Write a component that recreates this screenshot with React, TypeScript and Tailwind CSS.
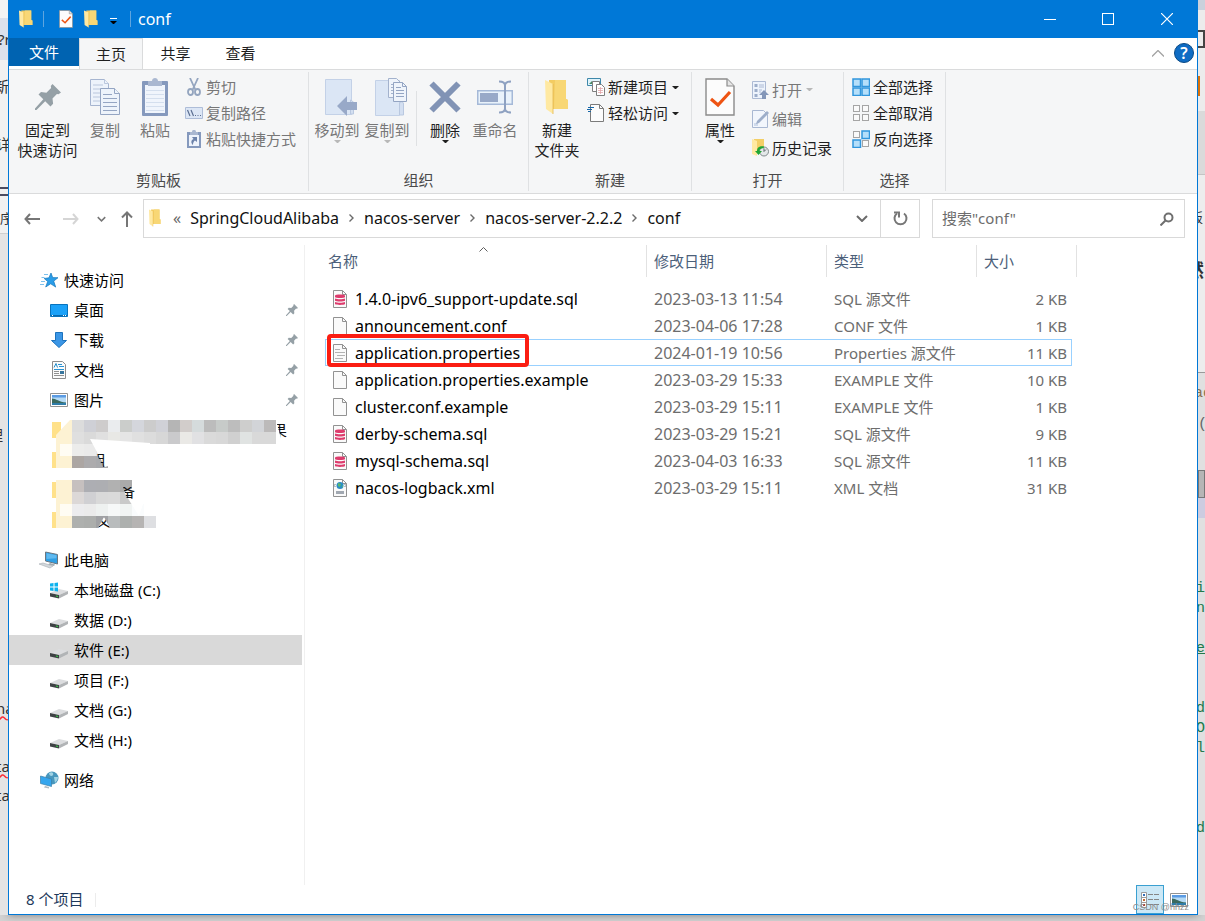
import type { ReactNode } from "react";

const files = [
  { name: "1.4.0-ipv6_support-update.sql", date: "2023-03-13 11:54", type: "SQL 源文件", size: "2 KB", icon: "sql" },
  { name: "announcement.conf", date: "2023-04-06 17:28", type: "CONF 文件", size: "1 KB", icon: "blank" },
  { name: "application.properties", date: "2024-01-19 10:56", type: "Properties 源文件", size: "11 KB", icon: "lines", selected: true },
  { name: "application.properties.example", date: "2023-03-29 15:33", type: "EXAMPLE 文件", size: "10 KB", icon: "blank" },
  { name: "cluster.conf.example", date: "2023-03-29 15:11", type: "EXAMPLE 文件", size: "1 KB", icon: "blank" },
  { name: "derby-schema.sql", date: "2023-03-29 15:21", type: "SQL 源文件", size: "9 KB", icon: "sql" },
  { name: "mysql-schema.sql", date: "2023-04-03 16:33", type: "SQL 源文件", size: "11 KB", icon: "sql" },
  { name: "nacos-logback.xml", date: "2023-03-29 15:11", type: "XML 文档", size: "31 KB", icon: "xml" },
];

const drives = ["数据 (D:)", "软件 (E:)", "项目 (F:)", "文档 (G:)", "文档 (H:)"];

const crumbs = ["SpringCloudAlibaba", "nacos-server", "nacos-server-2.2.2", "conf"];

/* ---------- icons ---------- */

function FolderIcon({ className = "h-[18px] w-[14px]" }: { className?: string }) {
  return (
    <svg className={className} viewBox="0 0 24 36" preserveAspectRatio="none">
      <path d="M4 1h17v19l2 1v9H5z" fill="#f3cc62" />
      <path d="M10 1h11v19l2 1v9H9z" fill="#f8d775" />
      <path d="M0 1l8 4v30l-7-5z" fill="#ffe9a2" />
      <path d="M8 5v30" stroke="#e3b84e" strokeWidth="0.8" />
    </svg>
  );
}

function CheckDocIcon({ className }: { className: string }) {
  return (
    <svg className={className} viewBox="0 0 30 38" preserveAspectRatio="none">
      <path d="M1 1h21l7 7v29H1z" fill="#fcfcfc" stroke="#8b8b8b" strokeWidth="1.4" />
      <path d="M22 1v7h7" fill="#e6e6e6" stroke="#8b8b8b" strokeWidth="1.2" />
      <path d="M6 21l7 6L25 14" fill="none" stroke="#ee5413" strokeWidth="3.2" />
    </svg>
  );
}

function PinIcon({ className }: { className: string }) {
  return (
    <svg className={className} viewBox="0 0 26 26" fill="#95a0a6">
      <path d="M17.500 0L26 8.500l-2.500 1.800-1.600-.3-4.400 4.600.6 5.200-2.600 2.700-5.300-5.200L1.500 26 0 26 0 24.500 8.300 15.300 3.500 10.600 6 8.100l5.400.6L16.100 4 15.800 2z" />
    </svg>
  );
}

function CopyIcon() {
  return (
    <svg className="h-9 w-[30px]" viewBox="0 0 30 36" fill="#edf3fb" stroke="#a6b5d0">
      <path d="M.5.5h14l4 4v22H.5z" />
      <path d="M14.5.5v4h4M3 6h10M3 10h12M3 14h7M3 18h7M3 22h7" stroke="#bac7dd" />
      <path d="M10.500 9.500h14l5 5v21h-19z" stroke="#94a5c3" />
      <path d="M24.500 9.500v5h5M13 15.500h9M13 19.500h14M13 23.500h14M13 27.500h14M13 31.500h14" stroke="#94a5c3" />
    </svg>
  );
}

function PasteIcon() {
  return (
    <svg className="h-[38px] w-[26px]" viewBox="0 0 26 38">
      <rect y="3" width="26" height="35" rx="1" fill="#8599bd" />
      <path d="M3 7h20v28H3z" fill="#f0f5fc" />
      <path d="M4 12.500h18M4 16.500h18M4 20.500h18M4 24.500h18M4 28.500h18M4 32.500h18" stroke="#d4dfee" />
      <path d="M6 3h4c0-4 6-4 6 0h4v5H6z" fill="#aab8d1" />
    </svg>
  );
}

function ScissorsIcon() {
  return (
    <svg className="h-[18px] w-[14px]" viewBox="0 0 14 18" fill="none" stroke="#94a5bf">
      <path d="M3 0l5.500 12M11 0L5.500 12" strokeWidth="1.800" />
      <ellipse cx="3.500" cy="14" rx="2.500" ry="3" strokeWidth="1.800" />
      <ellipse cx="10.500" cy="14" rx="2.500" ry="3" strokeWidth="1.800" />
    </svg>
  );
}

function CopyPathIcon() {
  return (
    <svg className="h-3 w-[18px]" viewBox="0 0 18 12">
      <path d="M.5.5h17v11H.5z" fill="#dce6f5" stroke="#aebdd8" />
      <path d="M2.500 3l2.500 6M6 3l2.500 6" stroke="#5c6f92" strokeWidth="1.200" />
      <path d="M10 8.500h1M12.500 8.500h1M15 8.500h1" stroke="#5c6f92" />
    </svg>
  );
}

function PasteShortcutIcon() {
  return (
    <svg className="h-[18px] w-[14px]" viewBox="0 0 14 18">
      <path d="M0 2h14v16H0z" fill="#8599bd" />
      <path d="M2 5h10v11H2z" fill="#eef3fb" />
      <path d="M3 2h2c0-3 4-3 4 0h2v3H3z" fill="#a9b7d0" />
      <path d="M5 7h5v5l-2-1.500C6.500 11.500 6 13 6 15 3.500 13 4 10 6.500 9z" fill="#6d83ab" />
    </svg>
  );
}

function MoveToIcon() {
  return (
    <svg className="h-[38px] w-8" viewBox="0 0 32 38">
      <path d="M.5 1.500h26v35H.5z" fill="#dbe6f5" stroke="#c3d1e7" />
      <path d="M25.500 22v14h3V24z" fill="#d3dff1" stroke="#b9c8e0" />
      <path d="M12 28l10-10v6h10v8H22v6z" fill="#98a9c8" />
    </svg>
  );
}

function CopyToIcon() {
  return (
    <svg className="h-[38px] w-8" viewBox="0 0 32 38">
      <path d="M.5 2.500h24v35H.5z" fill="#dbe6f5" stroke="#c3d1e7" />
      <path d="M24.500 26c0-3 4-3 4 0v11h-4z" fill="#d3dff1" stroke="#b9c8e0" />
      <path d="M13.500.5h8l4 4v15h-12z" fill="#eff4fb" stroke="#a3b2cd" />
      <path d="M16 6.500h2M16 9.500h2M16 12.500h2M16 15.500h2" stroke="#a3b2cd" />
      <path d="M18.500 4.500h9l4 4v15h-13z" fill="#eff4fb" stroke="#94a5c3" />
      <path d="M27.500 4.500v4h4M21 9.500h5M21 12.500h8M21 15.500h8M21 18.500h8" fill="none" stroke="#94a5c3" />
    </svg>
  );
}

function DeleteIcon() {
  return (
    <svg className="size-8" viewBox="0 0 32 32">
      <path d="M2.500 2.500l27 27M29.500 2.500l-27 27" stroke="#8193b5" strokeWidth="6" />
    </svg>
  );
}

function RenameIcon() {
  return (
    <svg className="h-[34px] w-9" viewBox="0 0 36 34">
      <path d="M.75 10.750h34.500v13.500H.75z" fill="#e9f2fb" stroke="#a5b9d8" strokeWidth="1.500" />
      <path d="M3 13h18v9H3z" fill="#98a9c8" />
      <path d="M22 1.500c4 0 6 1 6 4v23c0 3-2 4-6 4M34 1.500c-4 0-6 1-6 4M28 28.500c0 3 2 4 6 4" fill="none" stroke="#8ea1c1" strokeWidth="2" />
    </svg>
  );
}

function NewItemIcon() {
  return (
    <svg className="h-[18px] w-[18px]" viewBox="0 0 18 18">
      <path d="M.5.5h13v7H.5z" fill="#dff3fb" stroke="#3e88aa" />
      <path d="M2 6l3-3 3 3z" fill="#4a8a65" />
      <path d="M5.500 3.500h7v10h-7z" fill="#fff" stroke="#7f7f7f" />
      <path d="M9.500 6.500h5l3 3v8h-8z" fill="#fff" stroke="#7f7f7f" />
      <path d="M11 10.500h5M11 12.500h5M11 14.500h5M13.500 9v7" stroke="#df9ca0" strokeWidth=".7" />
    </svg>
  );
}

function EasyAccessIcon() {
  return (
    <svg className="h-[18px] w-[18px]" viewBox="0 0 18 18">
      <path d="M3.500.5h9l4 4v13h-13z" fill="#fcfcfc" stroke="#7b7b7b" />
      <path d="M12.500.5v4h4" fill="none" stroke="#7b7b7b" />
      <path d="M1 3.500h6M0 5.500h5M1 7.500h3" stroke="#1767a8" strokeWidth="1.200" />
    </svg>
  );
}

function OpenIcon() {
  return (
    <svg className="h-[18px] w-[17px]" viewBox="0 0 17 18">
      <path d="M.5.5h13v17H.5z" fill="#edf3fc" stroke="#acbad4" />
      <path d="M2.500 3h3v3h-3zM2.500 8h3v3h-3zM2.500 13h3v3h-3z" fill="#9daeca" />
      <path d="M7 4h5M7 6h5M7 9h3M7 11h2" stroke="#acbad4" />
      <path d="M12 9l5 5h-3v4h-4v-4H7z" fill="#8396b8" />
    </svg>
  );
}

function EditIcon() {
  return (
    <svg className="h-[18px] w-[17px]" viewBox="0 0 17 18">
      <path d="M.5.500h11l4 4v13H.5z" fill="#f2f6fc" stroke="#a9b8d2" />
      <path d="M2 13h4v3H2z" fill="#cfdaeb" />
      <path d="M4 14l1-3L15 1l2 2L7 13z" fill="#9daec9" />
    </svg>
  );
}

function HistoryIcon() {
  return (
    <svg className="h-[18px] w-[17px]" viewBox="0 0 17 18">
      <path d="M2 0h10v13H2z" fill="#f3cf67" />
      <path d="M0 0l5 2v15l-5-2z" fill="#ffe9a2" />
      <circle cx="12" cy="12.500" r="4.500" fill="#e4e8e9" stroke="#818a8d" />
      <path d="M12 12.500V9.500M12 12.500l2-2" stroke="#5b666a" />
      <path d="M12 7.500c-5-1-7 1.500-7 4.500H3l3.500 4L10 12H7.500c0-2 2-3 4-2.500z" fill="#21a633" />
    </svg>
  );
}

/* four tiles, the filled ones are drawn in blue */
function TilesIcon({ filled }: { filled: boolean[] }) {
  const spots = [[1, 1], [10, 1], [1, 10], [10, 10]];
  return (
    <svg className="size-[18px]" viewBox="0 0 18 18">
      {spots.map(([x, y], i) => (
        <rect
          key={i}
          x={filled[i] ? x : x + 0.5}
          y={filled[i] ? y : y + 0.5}
          width={filled[i] ? 7.5 : 6}
          height={filled[i] ? 7.5 : 6}
          fill={filled[i] ? "#b5dffa" : "#fafafa"}
          stroke={filled[i] ? "#3196dd" : "#a5a5a5"}
          strokeWidth={filled[i] ? 1.5 : 1}
        />
      ))}
    </svg>
  );
}

function Caret({ className = "text-[#1f1f1f]" }: { className?: string }) {
  return (
    <svg className={"h-[3px] w-[7px] shrink-0 " + className} viewBox="0 0 7 3" fill="currentColor">
      <path d="M0 0h7L4 3H3z" />
    </svg>
  );
}

function ChevronIcon({ className }: { className: string }) {
  return (
    <svg className={className} viewBox="0 0 12 7" fill="none" stroke="currentColor" strokeWidth="2">
      <path d="M1 1l5 5 5-5" />
    </svg>
  );
}

function FileIcon({ kind }: { kind: string }) {
  return (
    <svg className="h-[18px] w-4 shrink-0" viewBox="0 0 16 18">
      <path d="M1.500.5h9l4 4v13h-13z" fill="#fafafa" stroke="#929292" />
      <path d="M10.500.5v4h4" fill="none" stroke="#929292" />
      {kind === "sql" && (
        <g fill="#dd3c6d">
          <path d="M3 5.500c0-1.300 10-1.300 10 0v1.500c0 1.300-10 1.300-10 0z" />
          <path d="M3 8.500c2 1 8 1 10 0v2.200c-1 1-9 1-10 0z" />
          <path d="M3 12c2 1 8 1 10 0v2c-1 1.200-9 1.200-10 0z" />
        </g>
      )}
      {kind === "lines" && <path d="M3 5.500h5M3 8.500h10M5 11.500h8M3 14.500h8" stroke="#b3b3b3" />}
      {kind === "xml" && (
        <g>
          <circle cx="8" cy="6.500" r="3.500" fill="#2c8dc5" />
          <path d="M6 4l3 1-1 3-2-1zM10 6l1 1-1 2z" fill="#5bba6c" />
          <path d="M3.500 5L2 6.500 3.500 8M12.500 5L14 6.500 12.500 8" fill="none" stroke="#7c8792" />
          <path d="M4 12h8v3H4z" fill="#a1a8b1" />
        </g>
      )}
    </svg>
  );
}

function StarIcon() {
  return (
    <svg className="h-4 w-[18px]" viewBox="0 0 18 16">
      <path d="M11 1l1.700 4.600 5.300.1-4.300 3.400 2 6-5-3.300-5 3.200 2-5.500-3.500-3 4.700-.7z" fill="#2a9de8" stroke="#1477bc" strokeWidth=".7" />
      <path d="M4 2.500h4M1.500 5.500h3M1 9.500h4M0 12.500h4" stroke="#5cb1e9" strokeWidth=".8" />
    </svg>
  );
}

function DesktopIcon() {
  return (
    <svg className="h-[13px] w-[18px]" viewBox="0 0 18 13">
      <path d="M.5.5h17v12H.5z" fill="#1ba1f8" stroke="#0873bd" />
      <path d="M1 11.500h16" stroke="#0869ae" />
      <path d="M2 11.500h1M13 11.500h1M15 11.500h1" stroke="#fff" />
    </svg>
  );
}

function DownloadIcon() {
  return (
    <svg className="h-4 w-[18px]" viewBox="0 0 18 16">
      <path d="M5.500.5h7v8h4L9 15.500 1.500 8.500h4z" fill="#3b96e6" stroke="#1c72bd" />
    </svg>
  );
}

function DocumentIcon() {
  return (
    <svg className="h-[18px] w-[18px]" viewBox="0 0 18 18">
      <path d="M2.500.5h10l3 3v14h-13z" fill="#fbfbfb" stroke="#8c8c8c" />
      <path d="M4 6.500L6 2.500l1.500 4" stroke="#218bc9" fill="none" />
      <path d="M8 3.500h4M9 5.500h5M4 8.500h10" stroke="#2a93d4" />
      <path d="M4 10.500h5M4 12.500h5M4 14.500h10" stroke="#919191" />
      <path d="M10 10h4v3h-4z" fill="#37759d" />
    </svg>
  );
}

function PictureIcon() {
  return (
    <svg className="h-[14px] w-[18px]" viewBox="0 0 18 14">
      <path d="M.5.5h17v13H.5z" fill="#fff" stroke="#929292" />
      <path d="M2 2h14v10H2z" fill="#b5daf5" />
      <path d="M2 2h14v2.500H2z" fill="#5b9be3" />
      <path d="M2 5.500c4 0 7 3.500 14 4v1H2z" fill="#3b6a5f" />
      <path d="M2 10h14v2H2z" fill="#2f7da9" />
    </svg>
  );
}

function ComputerIcon() {
  return (
    <svg className="h-[18px] w-5" viewBox="0 0 20 18">
      <path d="M6.500 1l12 2.500v9.500l-12-3z" fill="#2f9fe4" stroke="#6a7680" />
      <path d="M7.500 2.300l10 2v3l-10 .7z" fill="#60baf0" />
      <path d="M11 12l5 1.500-1 1.500-6-1.500z" fill="#a2abb0" />
      <path d="M0 13l4-1 10 3-3 2z" fill="#d3d8dc" stroke="#a6adb3" strokeWidth=".6" />
    </svg>
  );
}

function DriveIcon({ system }: { system?: boolean }) {
  return (
    <svg className="h-[18px] w-[18px]" viewBox="0 0 18 18">
      <path d="M0 12l9-4 9 2-9 4z" fill="#dcdddf" />
      <path d="M9 14l9-4v3l-9 4.500z" fill="#b1b4b6" />
      <path d="M0 12l9 2v3.500L0 15.500z" fill="#3e4244" />
      <path d="M6 14.500l2 .5v1l-2-.5z" fill="#37d44a" />
      {system && <path d="M0 2.500l3.500-.5v3.500H0zM4.500 2L8 1.500v4H4.500zM0 6.500h3.500V10L0 9.500zM4.500 6.500H8v4l-3.500-.5z" fill="#0eb2ee" />}
    </svg>
  );
}

function NetworkIcon() {
  return (
    <svg className="h-[18px] w-[19px]" viewBox="0 0 19 18">
      <circle cx="12" cy="7" r="6.500" fill="#4897bd" />
      <path d="M9 2c3-2 5 0 4 2s-4 1-4-2zM14 6l4 0c0 3-2 5-3 6z" fill="#a0d3e5" />
      <path d="M.5 5l11 3v7.500L.5 12.500z" fill="#35a6ee" stroke="#3b7fa9" strokeWidth=".7" />
      <path d="M5 15l4 1v1.500l-5-1z" fill="#b1bbc1" />
    </svg>
  );
}

/* mosaic painted over four pinned folder names */
const mosaic = [
  { x: 22, y: 5, c: ["#dcdcdc", "#cfd0d6", "#cecccc", "#eaecee", "#cbcdcb", "#d4d6dc", "#cccccc", "#d0d1d7", "#b5b5b5", "#d2cdcb", "#d5dbdc", "#bcbcbc", "#c7cbc9", "#bdbdbd", "#cececd", "#d2d4d8", "#bcbaba"] },
  { x: 22, y: 17, c: ["#dfdfdf", "#dadada", "#e0e0e0", "#e8e8e5", "#e5e5e5", "#e0e0e0", "#dcdcdc", "#d7d7d7", "#cacacc", "#eae9e6", "#e1e1e3", "#dadada", "#d8d8d8", "#d0d0d0", "#e0e3e2", "#d9d9d9", "#d9d9d9"] },
  { x: 22, y: 29, c: ["#ececeb", "#eaeaea", "#e4e4e4"] },
  { x: 22, y: 41, c: ["#aca6a3", "#acabad", "#a8a9ac"] },
  { x: 22, y: 65, c: ["#c6c0bf", "#adaeb3", "#adaeb2", "#b1b1b1", "#aaaaaa"] },
  { x: 22, y: 77, c: ["#dcd8d7", "#d0d0d3", "#d9d9d9", "#dadada", "#c9c9c9"] },
  { x: 22, y: 89, c: ["#ececee", "#ebebeb", "#eef1f0", "#f6f8f8", "#f1f4f3", "#fafcfd"] },
  { x: 22, y: 101, c: ["#aeb0ae", "#acaeac", "#a0a1a4", "#b9bcbd", "#adb0ae", "#b6b4b3", "#dedfe2"] },
];

function HiddenFolders() {
  return (
    <svg className="h-[120px] w-[240px]" viewBox="0 0 240 120">
      <defs>
        <clipPath id="gaps">
          <path d="M227 9h13v18h-8zM46 38h9v14h-2zM73 72h13v12H77zM48 113l6-11 6 11z" />
        </clipPath>
      </defs>
      <path d="M2 7h9v16H2zM2 37h8v16H2zM2 67h8v16H2zM2 97h8v16H2z" fill="#ffe18a" />
      <path d="M6 20L20 5h2v48H6zM6 65h16v48H6z" fill="#fdf2d3" />
      <path d="M10 29h12v12H10zM10 89h12v12H10z" fill="#fffcf3" />
      {mosaic.map((row) =>
        row.c.map((color, i) => (
          <rect key={row.y + "-" + i} x={row.x + i * 12} y={row.y} width="12" height="12" fill={color} />
        ))
      )}
      <path d="M40 24l60 4v2H58v21l-3 1zM227 15l6 14h-6zM74 77l12-5 8 14-5 15z" fill="#fff" />
      <path d="M48 113l6-11 6 11z" fill="#fff" />
      <g clipPath="url(#gaps)" fill="#111" fontSize="15" fontFamily="'Noto Sans CJK SC', sans-serif">
        <text x="222" y="21">果</text>
        <text x="40" y="51">明</text>
        <text x="70" y="82">备</text>
        <text x="46" y="111">文</text>
      </g>
    </svg>
  );
}

/* ---------- ribbon ---------- */

function Group({ label, className, children }: { label: string; className: string; children: ReactNode }) {
  return (
    <section className={"my-0.5 flex flex-col border-r border-[#dfe1e3] " + className}>
      <div className="flex flex-1 items-start">{children}</div>
      <h2 className="text-center leading-[22px] text-[#4a4a4a]">{label}</h2>
    </section>
  );
}

type BigProps = { icon: ReactNode; lines: string[]; disabled?: boolean; caret?: boolean; className?: string };

function BigButton({ icon, lines, disabled, caret, className = "w-[50px]" }: BigProps) {
  return (
    <button
      disabled={disabled}
      className={"flex shrink-0 flex-col items-center pt-1.5 whitespace-nowrap " + (disabled ? "text-[#777] " : "text-[#1f1f1f] ") + className}
    >
      <span className="flex h-[42px] items-center pb-1">{icon}</span>
      {lines.map((line) => (
        <span key={line} className="leading-5">{line}</span>
      ))}
      {caret && <Caret className={disabled ? "text-[#b8b8b8]" : "text-[#1f1f1f]"} />}
    </button>
  );
}

type SmallProps = { icon: ReactNode; label: string; disabled?: boolean; caret?: boolean; className?: string };

function SmallButton({ icon, label, disabled, caret, className = "h-[26px]" }: SmallProps) {
  return (
    <button
      disabled={disabled}
      className={"flex items-center whitespace-nowrap " + (disabled ? "text-[#777] " : "text-[#1f1f1f] ") + className}
    >
      <span className="mr-[3px] flex w-[18px] justify-center">{icon}</span>
      <span className="mr-1">{label}</span>
      {caret && <Caret className={disabled ? "text-[#b8b8b8]" : "text-[#1f1f1f]"} />}
    </button>
  );
}

function Ribbon() {
  return (
    <div className="flex h-[125px] border-y border-[#dadbdc] bg-[#f5f6f7]">
      <Group label="剪贴板" className="w-[300px]">
        <BigButton className="ml-1.5 w-[65px]" icon={<PinIcon className="size-[26px]" />} lines={["固定到", "快速访问"]} />
        <BigButton icon={<CopyIcon />} lines={["复制"]} disabled />
        <BigButton icon={<PasteIcon />} lines={["粘贴"]} disabled />
        <div className="flex flex-col pt-0.5 pl-[5px]">
          <SmallButton icon={<ScissorsIcon />} label="剪切" disabled />
          <SmallButton icon={<CopyPathIcon />} label="复制路径" disabled />
          <SmallButton icon={<PasteShortcutIcon />} label="粘贴快捷方式" disabled />
        </div>
      </Group>
      <Group label="组织" className="w-[220px]">
        <div className="ml-[3px] flex">
          <BigButton icon={<span className="pl-2"><MoveToIcon /></span>} lines={["移动到"]} disabled caret />
          <BigButton icon={<span className="pl-2"><CopyToIcon /></span>} lines={["复制到"]} disabled caret />
        </div>
        <div className="mr-[3px] ml-1 mt-[19px] h-[55px] w-px bg-[#dfe1e3]" />
        <BigButton icon={<DeleteIcon />} lines={["删除"]} caret />
        <BigButton icon={<RenameIcon />} lines={["重命名"]} disabled />
      </Group>
      <Group label="新建" className="w-[163px]">
        <BigButton className="ml-[3px] w-[50px]" icon={<FolderIcon className="h-9 w-6" />} lines={["新建", "文件夹"]} />
        <div className="flex flex-col pt-0.5 pl-[5px]">
          <SmallButton icon={<NewItemIcon />} label="新建项目" caret />
          <SmallButton icon={<EasyAccessIcon />} label="轻松访问" caret />
        </div>
      </Group>
      <Group label="打开" className="w-[152px]">
        <BigButton className="ml-[3px] w-[50px]" icon={<CheckDocIcon className="h-[38px] w-[30px]" />} lines={["属性"]} caret />
        <div className="flex flex-col pt-[3px] pl-1.5">
          <SmallButton className="h-[29px]" icon={<OpenIcon />} label="打开" disabled caret />
          <SmallButton className="h-[29px]" icon={<EditIcon />} label="编辑" disabled />
          <SmallButton className="h-[29px]" icon={<HistoryIcon />} label="历史记录" />
        </div>
      </Group>
      <Group label="选择" className="w-[102px]">
        <div className="flex flex-col pt-0.5 pl-2">
          <SmallButton icon={<TilesIcon filled={[true, true, true, true]} />} label="全部选择" />
          <SmallButton icon={<TilesIcon filled={[false, false, false, false]} />} label="全部取消" />
          <SmallButton icon={<TilesIcon filled={[false, true, true, false]} />} label="反向选择" />
        </div>
      </Group>
    </div>
  );
}

/* ---------- window parts ---------- */

function TitleBar() {
  return (
    <header className="flex h-[38px] items-center bg-[#0078d7] text-white">
      <div className="flex flex-1 items-center pl-2.5">
        <FolderIcon />
        <span className="mr-[15px] ml-2.5 h-4 w-px bg-[#5ea5df]" />
        <button aria-label="属性"><CheckDocIcon className="block h-[18px] w-[14px]" /></button>
        <button aria-label="新建文件夹" className="ml-[11px]"><FolderIcon className="block h-[18px] w-[14px]" /></button>
        <button aria-label="自定义快速访问工具栏" className="ml-3 flex flex-col items-center gap-0.5 pt-1">
          <span className="h-px w-[7px] bg-white" />
          <Caret className="text-black" />
        </button>
        <span className="mr-[7px] ml-[13px] h-4 w-px bg-[#5ea5df]" />
        <h1 className="text-base leading-5">conf</h1>
      </div>
      <button aria-label="最小化" className="flex h-full w-[58px] items-center justify-center">
        <span className="h-px w-3 bg-white" />
      </button>
      <button aria-label="最大化" className="flex h-full w-[58px] items-center justify-center">
        <span className="size-3 border border-white" />
      </button>
      <button aria-label="关闭" className="flex h-full w-[60px] items-center justify-center">
        <svg className="size-3" viewBox="0 0 12 12" stroke="#fff" strokeWidth="1.200"><path d="M0 0l12 12M12 0L0 12" /></svg>
      </button>
    </header>
  );
}

function TabBar() {
  return (
    <nav className="-mb-px flex h-8 text-[#1f1f1f]">
      <button className="h-[28px] w-[70px] bg-[#0063b1] text-white">文件</button>
      <button className="w-16 border border-b-0 border-[#dadbdc] bg-[#f5f6f7] pb-0.5">主页</button>
      <button className="w-[65px] pb-0.5">共享</button>
      <button className="w-[65px] pb-0.5">查看</button>
      <div className="ml-auto flex items-center gap-2.5 pr-[3px] pb-0.5">
        <button aria-label="最小化功能区" className="text-[#a3a3a3]">
          <svg className="h-[7px] w-3" viewBox="0 0 12 7" fill="none" stroke="currentColor" strokeWidth="1.300"><path d="M0 6.500l6-6 6 6" /></svg>
        </button>
        <button className="size-5 rounded-full border border-[#0b4a85] bg-[#0f6cc4] text-base leading-4 font-semibold text-white">?</button>
      </div>
    </nav>
  );
}

function AddressBar() {
  return (
    <div className="flex h-[51px] items-center pr-3 pb-0.5">
      <div className="flex w-[134px] items-center pl-[15px] text-[#767676]">
        <button aria-label="后退">
          <svg className="h-3 w-4" viewBox="0 0 16 12" fill="none" stroke="currentColor" strokeWidth="2"><path d="M6 1L1.500 6 6 11M1.500 6H16" /></svg>
        </button>
        <button aria-label="前进" className="ml-[23px] text-[#d5d5d5]">
          <svg className="h-3 w-4" viewBox="0 0 16 12" fill="none" stroke="currentColor" strokeWidth="2"><path d="M10 1l4.500 5-4.500 5M14.500 6H0" /></svg>
        </button>
        <button aria-label="最近浏览的位置" className="ml-[18px]"><ChevronIcon className="h-[6px] w-[9px]" /></button>
        <button aria-label="上移" className="ml-[15px]">
          <svg className="h-4 w-3" viewBox="0 0 12 16" fill="none" stroke="currentColor" strokeWidth="2"><path d="M1 6.500L6 1.500l5 5M6 1.500V16" /></svg>
        </button>
      </div>
      <div className="mr-3 flex h-[39px] flex-1 items-center border border-[#d9d9d9]">
        <div className="flex flex-1 items-center overflow-hidden pb-0.5 pl-[5px] text-base whitespace-nowrap text-[#111]">
          <FolderIcon className="h-[18px] w-3" />
          <span className="mr-[9px] ml-3 leading-5 text-[#666]">«</span>
          {crumbs.map((crumb, i) => (
            <span key={crumb} className="flex items-center">
              {i > 0 && (
                <svg className="mx-2.5 h-2 w-[5px]" viewBox="0 0 5 8" fill="none" stroke="#6b6b6b" strokeWidth="1.400"><path d="M.5.5L4 4 .5 7.500" /></svg>
              )}
              <a href="#" className="leading-5">{crumb}</a>
            </span>
          ))}
        </div>
        <button aria-label="上一个位置" className="flex w-9 justify-center text-[#6b6b6b]"><ChevronIcon className="h-[7px] w-3" /></button>
        <button aria-label="刷新" className="flex h-full w-[39px] items-center justify-center border-l border-[#d9d9d9]">
          <svg className="size-[15px]" viewBox="0 0 15 15" fill="none" stroke="#777" strokeWidth="2">
            <path d="M11 2.500A6 6 0 1 1 4 2.500" />
            <path d="M1 1.500h5v5" />
          </svg>
        </button>
      </div>
      <label className="flex h-[39px] w-[253px] items-center border border-[#d9d9d9] px-[9px]">
        <input aria-label="搜索" placeholder={'搜索"conf"'} className="min-w-0 flex-1 pb-0.5 outline-none placeholder:text-[#6d6d6d]" />
        <svg className="mr-px size-[14px]" viewBox="0 0 14 14" fill="none" stroke="#6f6f6f" strokeWidth="2">
          <circle cx="8.500" cy="5.500" r="4" />
          <path d="M5.500 8.500L.5 13.500" />
        </svg>
      </label>
    </div>
  );
}

type NavItemProps = { icon: ReactNode; label: string; top?: boolean; pinned?: boolean; active?: boolean };

function NavItem({ icon, label, top, pinned, active }: NavItemProps) {
  return (
    <a
      href="#"
      className={"mr-0.5 flex h-[30px] items-center text-black " + (top ? "pl-[30px] " : "pl-10 ") + (active ? "bg-[#d9d9d9]" : "")}
    >
      <span className="mr-[5px] flex w-5 justify-center">{icon}</span>
      {label}
      {pinned && <PinIcon className="mr-1 ml-auto size-3" />}
    </a>
  );
}

function Sidebar() {
  return (
    <aside className="w-[296px] shrink-0 border-r border-[#f0f0f0] pt-5">
      <NavItem top icon={<StarIcon />} label="快速访问" />
      <NavItem pinned icon={<DesktopIcon />} label="桌面" />
      <NavItem pinned icon={<DownloadIcon />} label="下载" />
      <NavItem pinned icon={<DocumentIcon />} label="文档" />
      <NavItem pinned icon={<PictureIcon />} label="图片" />
      <div className="mb-2.5 pl-[41px]">
        <HiddenFolders />
      </div>
      <NavItem top icon={<ComputerIcon />} label="此电脑" />
      <NavItem icon={<DriveIcon system />} label="本地磁盘 (C:)" />
      {drives.map((drive) => (
        <NavItem key={drive} icon={<DriveIcon />} label={drive} active={drive === "软件 (E:)"} />
      ))}
      <div className="mt-2.5">
        <NavItem top icon={<NetworkIcon />} label="网络" />
      </div>
    </aside>
  );
}

function FileTable() {
  return (
    <table className="w-[752px] table-fixed border-separate border-spacing-0 text-left">
      <colgroup>
        <col className="w-[322px]" />
        <col className="w-[180px]" />
        <col className="w-[150px]" />
        <col className="w-[95px]" />
        <col className="w-[5px]" />
      </colgroup>
      <thead className="text-[#4c607a]">
        <tr className="h-8">
          <th className="relative border-r border-[#e2e2e2] pl-[3px] font-normal">
            名称
            <svg className="absolute top-0.5 left-[154px] h-[5px] w-[9px]" viewBox="0 0 9 5" fill="none" stroke="#5e5e5e"><path d="M.5 4.500l4-4 4 4" /></svg>
          </th>
          <th className="border-r border-[#e2e2e2] pl-[7px] font-normal">修改日期</th>
          <th className="border-r border-[#e2e2e2] pl-[7px] font-normal">类型</th>
          <th colSpan={2} className="border-r border-[#e2e2e2] pl-[7px] font-normal">大小</th>
        </tr>
      </thead>
      <tbody className="text-[#6d6d6d]">
        <tr className="h-2" aria-hidden="true" />
        {files.map((file) => {
          const edge = file.selected ? "border-[#99d1ff]" : "border-transparent";
          return (
            <tr key={file.name} className="h-[27px]">
              <td className={"relative border-y border-l pl-1.5 text-base text-black " + edge}>
                <span className="flex items-center gap-[7px]">
                  <FileIcon kind={file.icon} />
                  {file.name}
                </span>
                {file.selected && <span className="absolute -top-1.5 left-px h-[33px] w-[202px] rounded-sm border-4 border-[#fb1d12]" />}
              </td>
              <td className={"border-y pl-[7px] text-base " + edge}>{file.date}</td>
              <td className={"border-y pl-[7px] " + edge}>{file.type}</td>
              <td className={"border-y border-r pr-1 text-right " + edge}>{file.size}</td>
            </tr>
          );
        })}
      </tbody>
    </table>
  );
}

function StatusBar() {
  return (
    <footer className="relative flex h-[29px] items-center pr-[9px] pl-[17px] text-[#1e395b]">
      <span className="pb-0.5">8 个项目</span>
      <span className="ml-3 h-3.5 w-px bg-[#ececec]" />
      <button aria-label="详细信息" className="ml-auto flex h-full w-7 items-center justify-center border border-[#3aa0d1] bg-[#cce8f6]">
        <svg className="h-4 w-[18px]" viewBox="0 0 18 16">
          <path d="M.5.5h5v15h-5zM.5 5.500h5M.5 10.500h5" fill="#fff" stroke="#9b9b9b" />
          <path d="M2 3h2" stroke="#2f70ba" strokeWidth="2" />
          <path d="M2 8h2" stroke="#c06b35" strokeWidth="2" />
          <path d="M2 13h2" stroke="#b63636" strokeWidth="2" />
          <path d="M7 2.500h5M13 2.500h5M7 7.500h5M13 7.500h5M7 12.500h5M13 12.500h5" stroke="#858585" />
        </svg>
      </button>
      <button aria-label="大图标" className="ml-1.5"><PictureIcon /></button>
      <span className="absolute right-2 bottom-px font-['Liberation_Sans',sans-serif] text-[9px] leading-3 text-[#8d8d8d]">CSDN @hhzz</span>
    </footer>
  );
}

/* slivers of the windows that lie behind this one */
function BackdropLeft() {
  return (
    <div aria-hidden="true" className="relative w-2 shrink-0 overflow-hidden bg-[#e4e4e4] whitespace-nowrap text-[#333]">
      <div className="h-[18px] bg-[#f4f4f4]" />
      <div className="h-[42px] bg-[#dce1ec]" />
      <div className="h-[174px] border-b border-[#cfcfcf] bg-[#f1f1f1]" />
      <span className="absolute top-7 -left-0.5">?r</span>
      <span className="absolute top-[75px] -left-1.5">新</span>
      <span className="absolute top-[133px] -left-1">详</span>
      <span className="absolute top-[187px] h-[9px] w-2 border-y-2 border-[#4b4b60]" />
      <span className="absolute top-[207px] left-0 text-[13px]">序</span>
      <span className="absolute top-[424px] -left-3">理</span>
      <span className="absolute top-[697px] -left-1 underline decoration-red-500 decoration-wavy">na</span>
      <span className="absolute top-[755px] -left-1 underline decoration-red-500 decoration-wavy">ta</span>
      <span className="absolute top-[784px] -left-1">ta</span>
    </div>
  );
}

function BackdropRight() {
  return (
    <div aria-hidden="true" className="relative w-[7px] shrink-0 overflow-hidden bg-[#e0e0e0] font-['Liberation_Mono','Noto_Sans_CJK_SC',monospace] whitespace-nowrap text-[#237a4b]">
      <div className="h-2.5 bg-[#cad1dc]" />
      <div className="h-[101px] bg-[#ececec]" />
      <div className="h-16 border-b border-[#c4c4c4] bg-[#dadada]" />
      <div className="h-[198px] border-b border-[#9a9a9a] bg-[#ededed]" />
      <span className="absolute top-[30px] left-0 h-[18px] w-[7px] border-2 border-l-0 border-[#444]" />
      <span className="absolute top-[76px] left-0 h-5 w-0.5 bg-[#d8720c]" />
      <span className="absolute top-[208px] -left-2 text-[13px] text-[#333]">板</span>
      <span className="absolute top-[258px] -left-3 text-lg font-bold text-[#333]">然</span>
      <span className="absolute top-[383px] -left-1 text-[#8a7050]">ac</span>
      <span className="absolute top-[414px] left-0 text-[#666]">(</span>
      <span className="absolute top-[470px] left-0 h-7 w-[7px] border border-[#777] bg-[#b5b5b5]" />
      <span className="absolute top-[498px] left-0 h-5 w-[7px] bg-[#cccce0]" />
      <span className="absolute top-[562px] -left-1.5">,</span>
      <span className="absolute top-[578px] -left-0.5">in</span>
      <span className="absolute top-[598px] -left-0.5">n</span>
      <span className="absolute top-[638px] -left-0.5 underline">e</span>
      <span className="absolute top-[698px] -left-0.5">d</span>
      <span className="absolute top-[718px] -left-0.5">O</span>
      <span className="absolute top-[738px] -left-0.5">l</span>
      <span className="absolute top-[818px] -left-0.5">d</span>
    </div>
  );
}

export default function App() {
  return (
    <div className="flex min-h-screen flex-col bg-[#d2d2d2] font-['Noto_Sans','Noto_Sans_CJK_SC',sans-serif] text-[15px] leading-[22px]">
      <div className="flex flex-1">
        <BackdropLeft />
        <main className="flex min-w-0 flex-1 flex-col border-x border-b border-[#0078d7] bg-white shadow-[0_0_8px_rgba(0,0,0,0.4)]">
          <TitleBar />
          <TabBar />
          <Ribbon />
          <AddressBar />
          <div className="flex flex-1">
            <Sidebar />
            <div className="min-w-0 flex-1 overflow-hidden pl-5">
              <FileTable />
            </div>
          </div>
          <StatusBar />
        </main>
        <BackdropRight />
      </div>
      <div aria-hidden="true" className="h-1.5" />
    </div>
  );
}
